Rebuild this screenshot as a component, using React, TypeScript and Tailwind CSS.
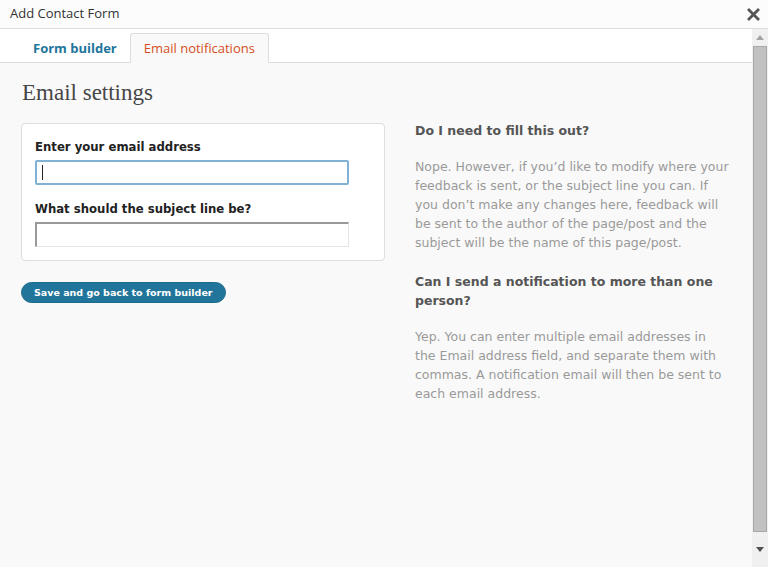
import React from "react";

export default function App() {
  const sans = { fontFamily: '"DejaVu Sans", Verdana, sans-serif' };
  return (
    <div className="w-[768px] h-[567px] flex flex-col bg-[#f9f9f9] overflow-hidden" style={sans}>
      <div className="h-[29px] shrink-0 bg-[#fcfcfc] border-b border-[#dddddd] flex items-center justify-between pl-[10px] pr-[8px]">
        <span className="text-[13px] text-[#333] font-['Open_Sans',sans-serif]">Add Contact Form</span>
        <svg width="13" height="13" viewBox="0 0 13 13" className="mt-[1px]">
          <path d="M2 2 L11 11 M11 2 L2 11" stroke="#555" strokeWidth="2.8" strokeLinecap="square" />
        </svg>
      </div>
      <div className="flex-1 flex min-h-0">
        <div className="flex-1 flex flex-col min-w-0">
          <div className="h-[34px] shrink-0 bg-white border-b border-[#dddddd] flex items-end pl-[33px]">
            <div className="h-[29px] flex items-center text-[13px] font-bold text-[#21759b] font-['Open_Sans',sans-serif] mr-[13px] mb-[-1px]">Form builder</div>
            <div className="h-[30px] mb-[-1px] px-[13px] pt-[1px] flex items-center bg-[#f9f9f9] border border-[#dddddd] border-b-[#f9f9f9] rounded-t-[3px] text-[13px] text-[#d54e21] font-['Open_Sans',sans-serif]">Email notifications</div>
          </div>
          <div className="flex-1 flex pl-[21px] pt-[16px]">
            <div className="w-[364px] shrink-0">
              <h1 className="text-[23px] leading-[28px] text-[#464646] font-['Liberation_Serif',Georgia,serif] font-normal ml-[1px]">Email settings</h1>
              <div className="mt-[16px] bg-white border border-[#dddddd] rounded-[4px] px-[13px] pt-[15px] pb-[13px]">
                <label className="block text-[11.7px] font-bold text-[#222] leading-[16px]">Enter your email address</label>
                <div className="mt-[5px] w-[314px] h-[25px] border-2 border-[#7fb2d5] rounded-[2px] bg-white flex items-center pl-[5px]">
                  <div className="w-[1px] h-[15px] bg-[#222]" />
                </div>
                <label className="block mt-[16px] text-[11.7px] font-bold text-[#222] leading-[16px]">What should the subject line be?</label>
                <div className="mt-[5px] w-[314px] h-[25px] border border-[#e4e4e4] border-t-2 border-t-[#999] border-l-2 border-l-[#999] bg-white" />
              </div>
              <button className="mt-[21px] h-[21px] px-[12px] rounded-full bg-[#21759b] text-white text-[9.5px] font-bold leading-[19px] border border-[#1c6a8c]">Save and go back to form builder</button>
            </div>
            <div className="ml-[30px] w-[315px] pt-[42px]">
              <h3 className="text-[12.5px] font-bold text-[#555] leading-[19px]">Do I need to fill this out?</h3>
              <p className="mt-[17px] text-[12.5px] text-[#999] leading-[19px]">Nope. However, if you’d like to modify where your feedback is sent, or the subject line you can. If you don’t make any changes here, feedback will be sent to the author of the page/post and the subject will be the name of this page/post.</p>
              <h3 className="mt-[20px] text-[12.5px] font-bold text-[#555] leading-[19px]">Can I send a notification to more than one person?</h3>
              <p className="mt-[17px] text-[12.5px] text-[#999] leading-[19px]">Yep. You can enter multiple email addresses in the Email address field, and separate them with commas. A notification email will then be sent to each email address.</p>
            </div>
          </div>
        </div>
        <div className="w-[16px] shrink-0 bg-[#f0f0f0] flex flex-col items-center">
          <div className="h-[17px] flex items-center justify-center">
            <svg width="8" height="5" viewBox="0 0 8 5"><path d="M0 5 L4 0 L8 5 Z" fill="#a3a3a3" /></svg>
          </div>
          <div className="w-[14px] flex-1 bg-[#c1c1c1] border border-[#a8a8a8]" />
          <div className="h-[35px] flex items-center justify-center">
            <svg width="8" height="5" viewBox="0 0 8 5"><path d="M0 0 L8 0 L4 5 Z" fill="#505050" /></svg>
          </div>
        </div>
      </div>
    </div>
  );
}
